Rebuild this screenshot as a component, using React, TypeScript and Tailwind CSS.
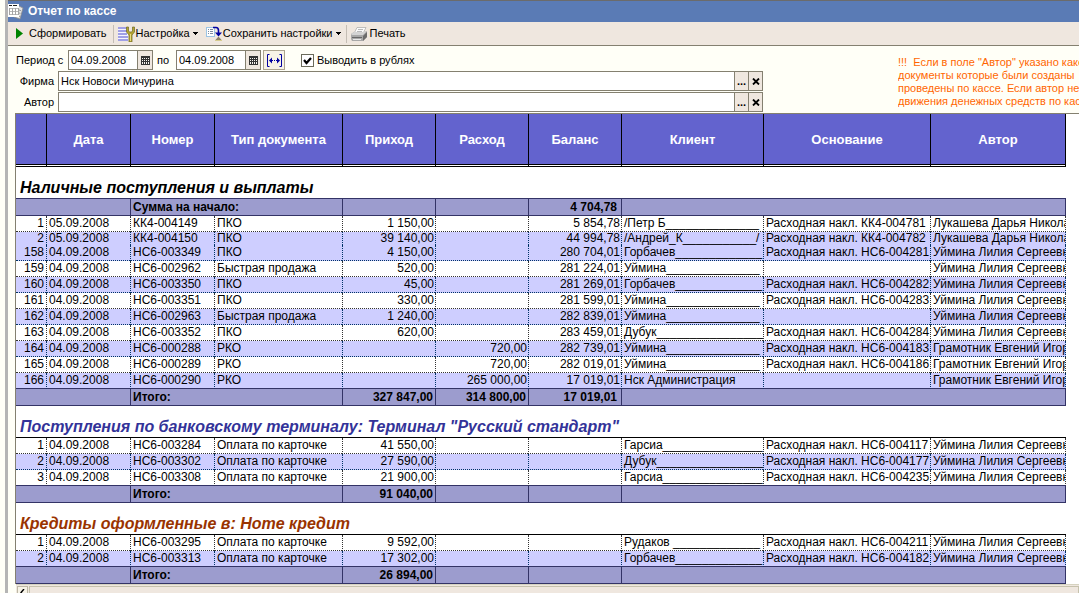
import { ReactNode } from 'react'
import clsx from 'clsx'

type Row = {
  n: number
  date: string
  num: string
  type: string
  income?: string
  expense?: string
  balance?: string
  client: string
  basis?: string
  author: string
  short?: boolean
}

const uymina = 'Уймина Лилия Сергеевна'
const gramotnik = 'Грамотник Евгений Игоревич'
const lukasheva = 'Лукашева Дарья Николаевна'

const cash: Row[] = [
  { n: 1, date: '05.09.2008', num: 'КК4-004149', type: 'ПКО', income: '1 150,00', balance: '5 854,78', client: '/Петр Б______________', basis: 'Расходная накл. КК4-004781', author: lukasheva },
  { n: 2, date: '05.09.2008', num: 'КК4-004150', type: 'ПКО', income: '39 140,00', balance: '44 994,78', client: '/Андрей_К___________/', basis: 'Расходная накл. КК4-004782', author: lukasheva, short: true },
  { n: 158, date: '04.09.2008', num: 'НС6-003349', type: 'ПКО', income: '4 150,00', balance: '280 704,01', client: 'Горбачев_____________', basis: 'Расходная накл. НС6-004281', author: uymina },
  { n: 159, date: '04.09.2008', num: 'НС6-002962', type: 'Быстрая продажа', income: '520,00', balance: '281 224,01', client: 'Уймина______________', author: uymina },
  { n: 160, date: '04.09.2008', num: 'НС6-003350', type: 'ПКО', income: '45,00', balance: '281 269,01', client: 'Горбачев_____________', basis: 'Расходная накл. НС6-004282', author: uymina },
  { n: 161, date: '04.09.2008', num: 'НС6-003351', type: 'ПКО', income: '330,00', balance: '281 599,01', client: 'Уймина______________', basis: 'Расходная накл. НС6-004283', author: uymina },
  { n: 162, date: '04.09.2008', num: 'НС6-002963', type: 'Быстрая продажа', income: '1 240,00', balance: '282 839,01', client: 'Уймина______________', author: uymina },
  { n: 163, date: '04.09.2008', num: 'НС6-003352', type: 'ПКО', income: '620,00', balance: '283 459,01', client: 'Дубук________________', basis: 'Расходная накл. НС6-004284', author: uymina },
  { n: 164, date: '04.09.2008', num: 'НС6-000288', type: 'РКО', expense: '720,00', balance: '282 739,01', client: 'Уймина______________', basis: 'Расходная накл. НС6-004183', author: gramotnik },
  { n: 165, date: '04.09.2008', num: 'НС6-000289', type: 'РКО', expense: '720,00', balance: '282 019,01', client: 'Уймина______________', basis: 'Расходная накл. НС6-004186', author: gramotnik },
  { n: 166, date: '04.09.2008', num: 'НС6-000290', type: 'РКО', expense: '265 000,00', balance: '17 019,01', client: 'Нск Администрация', author: gramotnik },
]

const terminal: Row[] = [
  { n: 1, date: '04.09.2008', num: 'НС6-003284', type: 'Оплата по карточке', income: '41 550,00', client: 'Гарсиа_______________', basis: 'Расходная накл. НС6-004117', author: uymina },
  { n: 2, date: '04.09.2008', num: 'НС6-003302', type: 'Оплата по карточке', income: '27 590,00', client: 'Дубук________________', basis: 'Расходная накл. НС6-004177', author: uymina },
  { n: 3, date: '04.09.2008', num: 'НС6-003308', type: 'Оплата по карточке', income: '21 900,00', client: 'Гарсиа_______________', basis: 'Расходная накл. НС6-004235', author: uymina },
]

const credit: Row[] = [
  { n: 1, date: '04.09.2008', num: 'НС6-003295', type: 'Оплата по карточке', income: '9 592,00', client: 'Рудаков _____________', basis: 'Расходная накл. НС6-004211', author: uymina },
  { n: 2, date: '04.09.2008', num: 'НС6-003313', type: 'Оплата по карточке', income: '17 302,00', client: 'Горбачев_____________', basis: 'Расходная накл. НС6-004182', author: uymina },
]

const heads = ['', 'Дата', 'Номер', 'Тип документа', 'Приход', 'Расход', 'Баланс', 'Клиент', 'Основание', 'Автор']

function ReportIcon() {
  return (
    <svg width="16" height="16" viewBox="0 0 16 16">
      <path d="M9 1l6 3-3 11-6-2z" fill="#e4e4e4" stroke="#8c8c8c" strokeWidth="0.8" />
      <path d="M11 6l2 .6M11 9l1.500 .4M10 12l2 .5" stroke="#9a9a9a" />
      <path d="M0 0h11v13H0z" fill="#fff" />
      <g shapeRendering="crispEdges">
        <path d="M1 1h3v1H1zM5 1h4v1H5z" fill="#222" />
        <path d="M1 4h9v1H1zM1 7h9v1H1zM1 10h9v1H1z" fill="#b9b9b9" />
        <path d="M1 4h1v7H1zM4 4h1v7H4zM7 4h1v7H7zM10 4h1v7h-1z" fill="#a5a5a5" />
      </g>
    </svg>
  )
}

function SettingsIcon() {
  return (
    <svg width="17" height="16" viewBox="0 0 17 16">
      <g shapeRendering="crispEdges">
        <path d="M0 1h10v14H0z" fill="#f4f4ff" />
        <path d="M0 1h9v2H0zM0 4h9v2H0zM0 7h9v2H0zM0 10h10v2H0zM0 13h10v2H0z" fill="#a0a0e6" />
      </g>
      <path d="M8.500 1h2v4l1 1h2l1-1V1h2v5l-2.500 3v7h-3V9L8.500 6z" fill="#b5a531" stroke="#6d6724" strokeWidth="0.7" />
      <path d="M12.500 8v7" stroke="#e8dc80" />
    </svg>
  )
}

function SaveSettingsIcon() {
  return (
    <svg width="17" height="16" viewBox="0 0 17 16">
      <g shapeRendering="crispEdges">
        <path d="M0 1h9v10H0z" fill="#9cc4e4" />
        <path d="M1 2h7v8H1z" fill="#fff" />
        <path d="M2 3h1v1H2zM4 3h3v1H4zM2 5h1v1H2zM4 5h3v1H4zM2 7h1v1H2zM4 7h3v1H4z" fill="#7a8aa0" />
      </g>
      <path d="M7 1.500h3q2.500 0 2.500 3V7" fill="none" stroke="#0000a0" strokeWidth="1.600" />
      <path d="M9 6.500h7l-3.500 4z" fill="#0000a0" />
      <path d="M12.500 10.500l3.500 4H9z" fill="#8c8468" />
      <path d="M9 14h7v1H9z" fill="#d8cc90" />
    </svg>
  )
}

function PrinterIcon() {
  return (
    <svg width="17" height="14" viewBox="0 0 17 14">
      <path d="M6 .5h9l-3 6H3z" fill="#fafafa" stroke="#a8a8a8" strokeWidth="0.7" />
      <path d="M7 2.500h5M6 4.500h5" stroke="#b8b8b8" />
      <path d="M0 7l3-2h10l3-1v6l-4 4H1l-1-2z" fill="#a8a8a8" />
      <path d="M0 7l3-2h10l3-1-4 4H1z" fill="#d4d4d4" />
      <path d="M12 9l4-4v5l-4 4z" fill="#6c6c6c" />
      <path d="M1 10.500h10" stroke="#686868" />
      <path d="M2 12.500h8" stroke="#e8e8e8" />
    </svg>
  )
}

function CalendarIcon() {
  return (
    <svg width="9" height="9" viewBox="0 0 9 9" shapeRendering="crispEdges">
      <path d="M0 0h9v9H0z" fill="#333" />
      <path d="M1 2h1v1H1zM3 2h1v1H3zM5 2h1v1H5zM7 2h1v1H7zM1 4h1v1H1zM3 4h1v1H3zM5 4h1v1H5zM7 4h1v1H7zM1 6h1v2H1zM3 6h1v2H3zM5 6h1v2H5zM7 6h1v2H7z" fill="#f7f3ef" />
    </svg>
  )
}

function Caret() {
  return (
    <svg width="5" height="3" viewBox="0 0 5 3" shapeRendering="crispEdges" className="ml-[3px]">
      <path d="M0 0h5v1H0zM1 1h3v1H1zM2 2h1v1H2z" fill="#000" />
    </svg>
  )
}

function Separator() {
  return <span className="h-[18px] w-px bg-[#c5beb5]" />
}

function DateField({ id, label }: { id: string; label: string }) {
  return (
    <span className="flex h-5 w-[85px] border border-[#848070] bg-white">
      <input id={id} aria-label={label} defaultValue="04.09.2008" className="w-[68px] min-w-0 pl-[2px] outline-none" />
      <button type="button" aria-label="Календарь" className="flex flex-1 items-center justify-center border-l border-[#848070] bg-[#efe7df]">
        <CalendarIcon />
      </button>
    </span>
  )
}

function PickField({ id, label, value }: { id: string; label: string; value: string }) {
  return (
    <div className="flex items-center pl-2">
      <label htmlFor={id} className="w-[38px] text-right">
        {label}
      </label>
      <span className="ml-1 flex h-5 flex-1 border border-[#848070] bg-white">
        <input id={id} defaultValue={value} className="min-w-0 flex-1 pl-[2px] outline-none" />
        <button type="button" aria-label="Выбрать" className="w-[14px] border-l border-[#848070] bg-[#efe7df] leading-3 font-bold">
          ...
        </button>
        <button type="button" aria-label="Очистить" className="flex w-[14px] items-center justify-center border-l border-[#848070] bg-[#efe7df]">
          <svg width="8" height="7" viewBox="0 0 8 7">
            <path d="M1 .5l6 6M7 .5l-6 6" stroke="#000" strokeWidth="1.8" />
          </svg>
        </button>
      </span>
    </div>
  )
}

function Cell({ children, right, short, first }: { children?: ReactNode; right?: boolean; short?: boolean; first?: boolean }) {
  return (
    <td className={clsx('border-dotted p-0 last:border-r', !short && 'border-b', !first && 'border-l')}>
      <div
        className={clsx(
          'overflow-hidden whitespace-nowrap',
          short ? 'h-[13px] leading-[13px]' : 'h-[15px] leading-[15px]',
          right ? 'text-right' : 'pl-[2px]',
          right && (first ? 'pr-[2px]' : 'pr-px'),
        )}
      >
        {children}
      </div>
    </td>
  )
}

function Title({ children, color, border }: { children: ReactNode; color: string; border: string }) {
  return (
    <tr>
      <th colSpan={10} className={clsx('h-8 border-b bg-white p-0 pl-1 text-left align-bottom text-base leading-5 italic', color, border)}>
        {children}
      </th>
    </tr>
  )
}

function Rows({ rows }: { rows: Row[] }) {
  return rows.map((r, i) => {
    // the line under the last row belongs to the totals band
    const last = i === rows.length - 1
    return (
      <tr
        key={r.n}
        className={clsx(
          r.n % 2 === 0 ? 'bg-[#ceceff] *:border-[#003366]' : 'bg-white *:border-[#333333]',
          last && '*:border-b-[#333366] *:[border-bottom-style:solid]',
        )}
      >
        <Cell right first short={r.short}>{r.n}</Cell>
        <Cell short={r.short}>{r.date}</Cell>
        <Cell short={r.short}>{r.num}</Cell>
        <Cell short={r.short}>{r.type}</Cell>
        <Cell right short={r.short}>{r.income}</Cell>
        <Cell right short={r.short}>{r.expense}</Cell>
        <Cell right short={r.short}>{r.balance}</Cell>
        <Cell short={r.short}>{r.client}</Cell>
        <Cell short={r.short}>{r.basis}</Cell>
        <Cell short={r.short}>{r.author}</Cell>
      </tr>
    )
  })
}

function Total({ label, income, expense, balance }: { label: string; income?: string; expense?: string; balance?: string }) {
  return (
    <tr className="bg-[#9c9cce] font-bold *:h-[17px] *:border-b *:border-[#333366] *:p-0 *:leading-4">
      <td colSpan={2} />
      <td colSpan={2} className="border-l">
        <div className="pl-[2px]">{label}</div>
      </td>
      <td className="border-l text-right">
        <div className="pr-[2px]">{income}</div>
      </td>
      <td className="border-l text-right">
        <div className="pr-[2px]">{expense}</div>
      </td>
      <td className="border-l text-right">
        <div className="pr-1">{balance}</div>
      </td>
      <td colSpan={3} className="border-x" />
    </tr>
  )
}

export default function App() {
  return (
    <div className="flex min-h-screen overflow-hidden bg-[#fffff7] font-['Liberation_Sans',Arial,sans-serif] text-[11px] leading-[15px] text-black">
      <div className="w-2 shrink-0 border-r-[3px] border-[#b5b5b5]" />
      <main className="flex min-w-0 flex-1 flex-col">
        <header className="flex h-[22px] items-center gap-1 border-t border-[#6b6b6b] bg-[#5a7bb5] text-white">
          <ReportIcon />
          <h1 className="text-[12px] font-bold">Отчет по кассе</h1>
        </header>
        <div className="flex h-6 items-center border-b border-[#848070] bg-[#efe7df] whitespace-nowrap">
          <button className="flex items-center gap-[6px] pr-[6px] pl-2">
            <svg width="7" height="11" viewBox="0 0 7 11">
              <path d="M0 0l7 5.5L0 11z" fill="#008400" />
            </svg>
            Сформировать
          </button>
          <Separator />
          <button className="flex items-center pl-1">
            <SettingsIcon />
            <span className="pl-px">Настройка</span>
            <Caret />
          </button>
          <button className="flex items-center pr-[5px] pl-2">
            <SaveSettingsIcon />
            Сохранить настройки
            <Caret />
          </button>
          <Separator />
          <button className="flex items-center gap-[2px] pl-1">
            <PrinterIcon />
            Печать
          </button>
        </div>

        <form className="flex shrink-0 justify-between pt-1 pb-px">
          <div className="flex min-w-[755px] flex-col gap-px">
            <div className="flex h-5 items-center pl-2 whitespace-nowrap">
              <label htmlFor="from" className="w-[52px]">
                Период с
              </label>
              <DateField id="from" label="Период с" />
              <label htmlFor="to" className="w-[23px] pl-1">
                по
              </label>
              <DateField id="to" label="Период по" />
              <button type="button" aria-label="Выбрать период" className="ml-[2px] flex h-5 w-[22px] items-center justify-center border border-[#aca590] bg-[#f7f3e7]">
                <svg width="17" height="13" viewBox="0 0 17 13">
                  <path d="M3.500 .5h-2v12h2M13.500 .5h2v12h-2M4 6.500h3M10 6.500h3" fill="none" stroke="#0000a0" />
                  <path d="M3 6.500l3-3v6zM14 6.500l-3-3v6zM8 6h1v1H8z" fill="#0000a0" />
                </svg>
              </button>
              <label className="ml-4 flex items-center gap-[3px]">
                <span className="relative flex size-[13px]">
                  <input type="checkbox" defaultChecked className="peer size-[13px] appearance-none border border-[#6b6b5a] bg-white" />
                  <svg width="13" height="13" viewBox="0 0 13 13" className="pointer-events-none absolute inset-0 hidden peer-checked:block">
                    <path d="M3 6l2.500 3L10 4" fill="none" stroke="#000" strokeWidth="2.200" />
                  </svg>
                </span>
                Выводить в рублях
              </label>
            </div>
            <PickField id="firm" label="Фирма" value="Нск Новоси Мичурина" />
            <PickField id="author" label="Автор" value="" />
          </div>
          <p className="mt-[6px] w-[181px] shrink-0 overflow-hidden leading-[13px] whitespace-pre text-[#ff6600]">
            {'!!!  Если в поле "Автор" указано какой\nдокументы которые были созданы\nпроведены по кассе. Если автор не\nдвижения денежных средств по кассе'}
          </p>
        </form>

        <section className="ml-[7px] flex-1 overflow-hidden border-t border-l border-[#848070] bg-white text-[12px]">
          <table className="w-[1050px] table-fixed border-separate border-spacing-0">
            <colgroup>
              <col className="w-[30px]" />
              <col className="w-[84px]" />
              <col className="w-[84px]" />
              <col className="w-[128px]" />
              <col className="w-[93px]" />
              <col className="w-[93px]" />
              <col className="w-[93px]" />
              <col className="w-[142px]" />
              <col className="w-[167px]" />
              <col className="w-[136px]" />
            </colgroup>
            <thead>
              <tr>
                {heads.map((h, i) => (
                  <th
                    key={i}
                    className={clsx(
                      'h-[53px] border-b-[3px] border-double border-black bg-[#6363ce] bg-clip-padding p-0 text-[13px] text-white',
                      i > 0 && 'border-l [border-left-style:solid]',
                      i === 9 && 'border-r [border-right-style:solid]',
                    )}
                  >
                    {h}
                  </th>
                ))}
              </tr>
            </thead>
            <tbody>
              <Title color="text-black" border="border-[#333366]">Наличные поступления и выплаты</Title>
              <Total label="Сумма на начало:" balance="4 704,78" />
              <Rows rows={cash} />
              <Total label="Итого:" income="327 847,00" expense="314 800,00" balance="17 019,01" />
              <Title color="text-[#333399]" border="border-black">Поступления по банковскому терминалу: Терминал "Русский стандарт"</Title>
              <Rows rows={terminal} />
              <Total label="Итого:" income="91 040,00" />
              <Title color="text-[#993300]" border="border-black">Кредиты оформленные в: Home кредит</Title>
              <Rows rows={credit} />
              <Total label="Итого:" income="26 894,00" />
            </tbody>
          </table>
        </section>
        <div className="ml-2 flex h-[10px] shrink-0 overflow-hidden border-t border-[#d6d3c0] bg-[#efe7df]">
          <button aria-label="Влево" className="mt-px ml-px flex h-4 w-[11px] justify-center border border-[#bdb8a5] bg-[#f7f3e7] pt-[2px]">
            <svg width="5" height="7" viewBox="0 0 5 7">
              <path d="M4 0L1 3.500 4 7" fill="none" stroke="#000" strokeWidth="1.400" />
            </svg>
          </button>
          <span className="mt-px ml-px h-4 flex-1 border border-[#c6c2ad]" />
        </div>
      </main>
    </div>
  )
}
